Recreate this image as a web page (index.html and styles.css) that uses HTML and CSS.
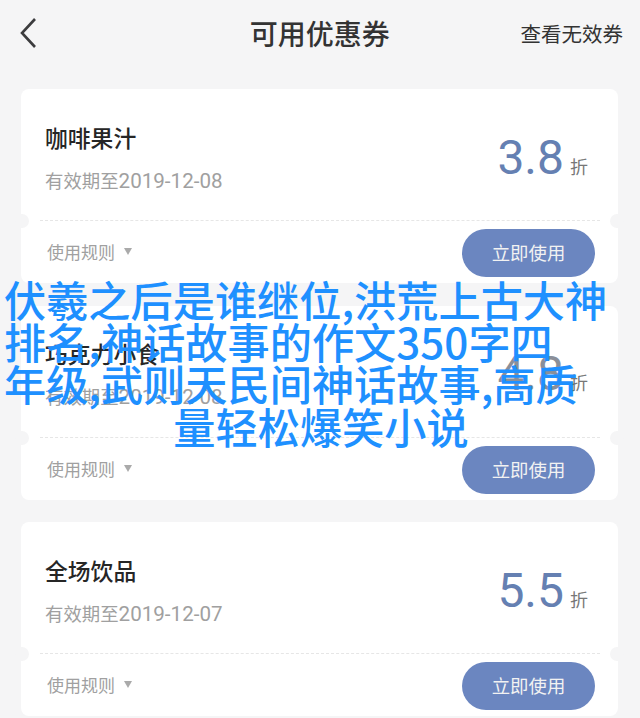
FILE: index.html
```html
<!DOCTYPE html>
<html lang="en">
<head>
    <meta charset="UTF-8">
    <meta name="viewport" content="width=device-width, initial-scale=1.0">
    <title>可用优惠券</title>
    <link rel="stylesheet" href="styles.css">
</head>
<body>
    <div class="header">
        <svg class="back" width="18" height="32" viewBox="0 0 18 32">
            <path d="M16 2 L3 16 L16 30" fill="none" stroke="#3c3c3e" stroke-width="2.6"/>
        </svg>
        <div class="header-title">可用优惠券</div>
        <div class="header-link">查看无效券</div>
    </div>

    <div class="list">
        <div class="card">
            <div class="card-top">
                <div class="info">
                    <div class="name">咖啡果汁</div>
                    <div class="date">有效期至<span class="day">2019-12-08</span></div>
                </div>
                <div class="discount"><span class="num">3.8</span><span class="unit">折</span></div>
            </div>
            <div class="card-bottom">
                <div class="rules">使用规则<span class="arrow"></span></div>
                <button class="use-btn">立即使用</button>
            </div>
        </div>

        <div class="card">
            <div class="card-top">
                <div class="info">
                    <div class="name">巧克力小食</div>
                    <div class="date">有效期至<span class="day">2019-12-08</span></div>
                </div>
                <div class="discount"><span class="num grey">4.8</span><span class="unit">折</span></div>
            </div>
            <div class="card-bottom">
                <div class="rules">使用规则<span class="arrow"></span></div>
                <button class="use-btn">立即使用</button>
            </div>
        </div>

        <div class="card">
            <div class="card-top">
                <div class="info">
                    <div class="name">全场饮品</div>
                    <div class="date">有效期至<span class="day">2019-12-07</span></div>
                </div>
                <div class="discount"><span class="num">5.5</span><span class="unit">折</span></div>
            </div>
            <div class="card-bottom">
                <div class="rules">使用规则<span class="arrow"></span></div>
                <button class="use-btn">立即使用</button>
            </div>
        </div>
    </div>

    <div class="overlay-title">
        <div>伏羲之后是谁继位,洪荒上古大神</div>
        <div>排名,神话故事的作文350字四</div>
        <div>年级,武则天民间神话故事,高质</div>
        <div class="overlay-last">量轻松爆笑小说</div>
    </div>
</body>
</html>
```

FILE: styles.css
```css
body {
    font-family: "Liberation Sans", "Noto Sans CJK SC", sans-serif;
    margin: 0;
    background-color: #f5f5f6;
    height: 718px;
    overflow: hidden;
    position: relative;
}

.header {
    height: 66px;
    padding: 0 17px 0 19px;
    display: flex;
    align-items: center;
    justify-content: space-between;
    color: #333;
}

.back {
    display: block;
}

.header-title {
    font-size: 28px;
    font-weight: 500;
    margin-left: 82px;
}

.header-link {
    font-size: 20.5px;
}

.list {
    margin: 23px 22px 0 21px;
    display: flex;
    flex-direction: column;
    gap: 22.5px;
}

.card {
    height: 194px;
    background: #fff;
    border-radius: 8px;
    position: relative;
}

.card::before, .card::after {
    content: '';
    position: absolute;
    top: 125px;
    width: 14px;
    height: 14px;
    border-radius: 50%;
    background-color: #f5f5f6;
}

.card::before {
    left: -6px;
}

.card::after {
    right: -6px;
}

.card-top {
    height: 132px;
    margin: 0 18px 0 19px;
    padding: 0 12px 0 5px;
    border-bottom: 1px dashed #e6e6e6;
    box-sizing: border-box;
    display: flex;
    justify-content: space-between;
    align-items: center;
}

.info {
    padding-top: 8px;
}

.name {
    font-size: 22.8px;
    font-weight: 500;
    line-height: 30px;
    color: #262626;
}

.date {
    font-size: 18.4px;
    line-height: 24px;
    margin-top: 15px;
    color: #a0a0a0;
}

.day {
    font-family: Roboto, sans-serif;
    font-size: 20.6px;
}

.discount {
    display: flex;
    align-items: baseline;
    margin-top: 5px;
}

.num {
    font-family: Roboto, sans-serif;
    font-size: 48px;
    color: #6580b2;
}

.num.grey {
    color: #8a8f99;
}

.unit {
    font-size: 18px;
    margin-left: 6px;
    color: #777;
}

.card-bottom {
    padding: 8px 23px 0 26px;
    display: flex;
    justify-content: space-between;
    align-items: center;
}

.rules {
    font-size: 17px;
    color: #a0a0a0;
    display: flex;
    align-items: center;
    margin-top: -3px;
}

.arrow {
    width: 0;
    height: 0;
    margin-left: 9px;
    border: 4px solid transparent;
    border-top: 7px solid #aaa;
    border-bottom: none;
}

.use-btn {
    width: 133px;
    height: 48px;
    padding: 0 0 2px;
    border: none;
    border-radius: 24px;
    background-color: #6b86c0;
    color: #f2f2f2;
    font-family: inherit;
    font-size: 18.4px;
}

.overlay-title {
    position: absolute;
    top: 278px;
    left: 4px;
    width: 634px;
    font-family: "Noto Sans CJK SC", sans-serif;
    font-weight: 500;
    font-size: 42.2px;
    line-height: 42.2px;
    color: #1e90ff;
    white-space: nowrap;
}

.overlay-last {
    text-align: center;
}
```
